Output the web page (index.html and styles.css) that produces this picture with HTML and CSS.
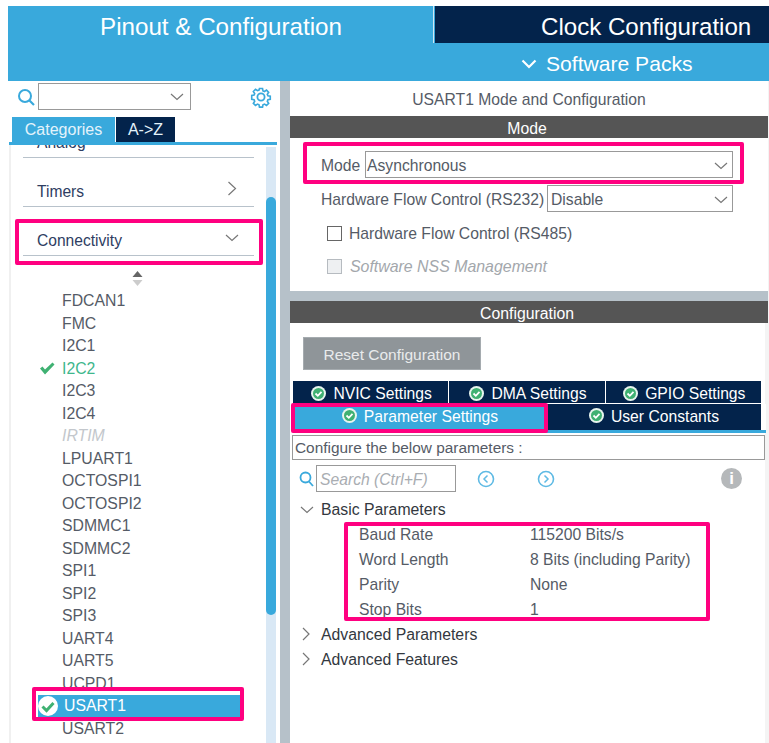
FILE: index.html
```html
<!DOCTYPE html>
<html lang="en">
<head>
<meta charset="utf-8">
<title>USART1 Mode and Configuration</title>
<link rel="stylesheet" href="styles.css">
</head>
<body>
<div class="page">
  <header class="head">
    <div class="head-tabs">
      <div class="head-tab head-active">Pinout &amp; Configuration</div>
      <div class="head-tab head-dark">Clock Configuration</div>
    </div>
    <div class="head-sub">
      <svg class="sub-chev" width="16" height="10" viewBox="0 0 16 10"><path d="M1.500 1.500 8 8l6.500-6.500" fill="none" stroke="#fff" stroke-width="2.200"/></svg>
      <span>Software Packs</span>
    </div>
  </header>

  <div class="body">
    <aside class="left">
      <div class="search-row">
        <svg class="mag" width="19" height="19" viewBox="0 0 19 19"><circle cx="8" cy="8" r="6" fill="none" stroke="#39a9dc" stroke-width="2"/><path d="M12.500 12.500 17 17" stroke="#39a9dc" stroke-width="2.200"/></svg>
        <div class="combo">
          <svg width="14" height="8" viewBox="0 0 14 8"><path d="M1 1l6 5.500L13 1" fill="none" stroke="#777" stroke-width="1.200"/></svg>
        </div>
        <svg class="gear" width="22" height="22" viewBox="0 0 22 22"><g fill="none" stroke="#39a9dc" stroke-width="1.800"><circle cx="11" cy="11" r="3.600"/><path d="M9.300 1.600h3.400l.5 2.600 1.700.7 2.200-1.500 2.400 2.400-1.500 2.200.7 1.700 2.600.5v3.400l-2.600.5-.7 1.700 1.500 2.200-2.400 2.400-2.200-1.500-1.700.7-.5 2.600H9.300l-.5-2.600-1.700-.7-2.200 1.500-2.400-2.400 1.500-2.200-.7-1.700-2.600-.5V9.300l2.600-.5.700-1.700-1.500-2.200 2.400-2.400 2.200 1.500 1.700-.7z" transform="translate(1.100 1.100) scale(.9)"/></g></svg>
      </div>
      <div class="cat-tabs">
        <div class="cat-tab cat-on">Categories</div>
        <div class="cat-tab cat-off">A-&gt;Z</div>
      </div>
      <div class="list-wrap">
        <div class="list">
          <div class="scroller">
            <div class="cat">Analog</div>
            <div class="cat">Timers
              <svg class="cat-ico" width="10" height="15" viewBox="0 0 10 15"><path d="M1.500 1l7 6.500-7 6.500" fill="none" stroke="#777" stroke-width="1.200"/></svg>
            </div>
            <div class="cat cat-open">Connectivity
              <svg class="cat-ico" width="14" height="8" viewBox="0 0 14 8"><path d="M1 1l6 5.500L13 1" fill="none" stroke="#777" stroke-width="1.200"/></svg>
            </div>
            <div class="sort">
              <svg width="11" height="15" viewBox="0 0 11 15"><path d="M5.500 0 10.500 6H.5z" fill="#666"/><path d="M5.500 15 10.500 9H.5z" fill="#ccc"/></svg>
            </div>
            <ul class="items">
              <li>FDCAN1</li>
              <li>FMC</li>
              <li>I2C1</li>
              <li class="ok"><svg class="tick" width="16" height="13" viewBox="0 0 16 13"><path d="M1 6.500l2.500-2L6 7.500 13.500.5 15.500 2.500 6 12.500z" fill="#3fb172"/></svg>I2C2</li>
              <li>I2C3</li>
              <li>I2C4</li>
              <li class="off">IRTIM</li>
              <li>LPUART1</li>
              <li>OCTOSPI1</li>
              <li>OCTOSPI2</li>
              <li>SDMMC1</li>
              <li>SDMMC2</li>
              <li>SPI1</li>
              <li>SPI2</li>
              <li>SPI3</li>
              <li>UART4</li>
              <li>UART5</li>
              <li>UCPD1</li>
              <li class="sel"><svg class="sel-ico" width="20" height="20" viewBox="0 0 20 20"><circle cx="10" cy="10" r="10" fill="#fff"/><path d="M4.500 10.500 8.500 14.500 15.500 7" fill="none" stroke="#3fb172" stroke-width="3"/></svg>USART1</li>
              <li>USART2</li>
            </ul>
          </div>
        </div>
        <div class="track"><div class="thumb"></div></div>
      </div>
    </aside>

    <main class="right">
      <div class="title">USART1 Mode and Configuration</div>
      <div class="bar">Mode</div>
      <section class="mode">
        <div class="frow row-mode">
          <label class="flabel">Mode</label>
          <div class="select sel-wide">Asynchronous<svg width="14" height="8" viewBox="0 0 14 8"><path d="M1 1l6 5.500L13 1" fill="none" stroke="#777" stroke-width="1.200"/></svg></div>
        </div>
        <div class="frow row-hw">
          <label class="flabel">Hardware Flow Control (RS232)</label>
          <div class="select sel-hw">Disable<svg width="14" height="8" viewBox="0 0 14 8"><path d="M1 1l6 5.500L13 1" fill="none" stroke="#777" stroke-width="1.200"/></svg></div>
        </div>
        <div class="crow crow-a"><span class="box"></span>Hardware Flow Control (RS485)</div>
        <div class="crow crow-b"><span class="box box-off"></span>Software NSS Management</div>
      </section>
      <div class="split"></div>
      <div class="bar">Configuration</div>
      <section class="conf">
        <div class="reset">Reset Configuration</div>
        <div class="tabs tabs-top">
          <div class="tab"><svg class="ci" width="15" height="15" viewBox="0 0 15 15"><circle cx="7.500" cy="7.500" r="7.500" fill="#e8f5ee"/><circle cx="7.500" cy="7.500" r="5.500" fill="#3fb172"/><path d="M4.500 7.500 6.800 9.800 10.500 5.800" fill="none" stroke="#fff" stroke-width="1.800"/></svg>NVIC Settings</div>
          <div class="tab"><svg class="ci" width="15" height="15" viewBox="0 0 15 15"><circle cx="7.500" cy="7.500" r="7.500" fill="#e8f5ee"/><circle cx="7.500" cy="7.500" r="5.500" fill="#3fb172"/><path d="M4.500 7.500 6.800 9.800 10.500 5.800" fill="none" stroke="#fff" stroke-width="1.800"/></svg>DMA Settings</div>
          <div class="tab"><svg class="ci" width="15" height="15" viewBox="0 0 15 15"><circle cx="7.500" cy="7.500" r="7.500" fill="#e8f5ee"/><circle cx="7.500" cy="7.500" r="5.500" fill="#3fb172"/><path d="M4.500 7.500 6.800 9.800 10.500 5.800" fill="none" stroke="#fff" stroke-width="1.800"/></svg>GPIO Settings</div>
        </div>
        <div class="tabs tabs-bot">
          <div class="tab tab-on"><svg class="ci" width="15" height="15" viewBox="0 0 15 15"><circle cx="7.500" cy="7.500" r="7.500" fill="#e8f5ee"/><circle cx="7.500" cy="7.500" r="5.500" fill="#3fb172"/><path d="M4.500 7.500 6.800 9.800 10.500 5.800" fill="none" stroke="#fff" stroke-width="1.800"/></svg>Parameter Settings</div>
          <div class="tab tab-user"><svg class="ci" width="15" height="15" viewBox="0 0 15 15"><circle cx="7.500" cy="7.500" r="7.500" fill="#e8f5ee"/><circle cx="7.500" cy="7.500" r="5.500" fill="#3fb172"/><path d="M4.500 7.500 6.800 9.800 10.500 5.800" fill="none" stroke="#fff" stroke-width="1.800"/></svg>User Constants</div>
        </div>
        <div class="hint">Configure the below parameters :</div>
        <div class="tools">
          <svg class="mag2" width="15" height="16" viewBox="0 0 15 16"><circle cx="6.500" cy="6.500" r="5" fill="none" stroke="#39a9dc" stroke-width="1.800"/><path d="M10 10.500 14 15" stroke="#39a9dc" stroke-width="1.800"/></svg>
          <div class="find">Search (Ctrl+F)</div>
          <svg class="nav nav-l" width="18" height="18" viewBox="0 0 18 18"><circle cx="9" cy="9" r="7.500" fill="none" stroke="#5fbae4" stroke-width="1.600"/><path d="M10.500 5.500 7 9l3.500 3.500" fill="none" stroke="#5fbae4" stroke-width="1.500"/></svg>
          <svg class="nav nav-r" width="18" height="18" viewBox="0 0 18 18"><circle cx="9" cy="9" r="7.500" fill="none" stroke="#5fbae4" stroke-width="1.600"/><path d="M7.500 5.500 11 9l-3.500 3.500" fill="none" stroke="#5fbae4" stroke-width="1.500"/></svg>
          <div class="info">i</div>
        </div>
        <div class="tree">
          <div class="node"><svg class="tw" width="14" height="8" viewBox="0 0 14 8"><path d="M1 1l6 5.500L13 1" fill="none" stroke="#777" stroke-width="1.200"/></svg>Basic Parameters</div>
          <dl class="params">
            <dt>Baud Rate</dt><dd>115200 Bits/s</dd>
            <dt>Word Length</dt><dd>8 Bits (including Parity)</dd>
            <dt>Parity</dt><dd>None</dd>
            <dt>Stop Bits</dt><dd>1</dd>
          </dl>
          <div class="node"><svg class="tw tw-r" width="8" height="14" viewBox="0 0 8 14"><path d="M1 1l6 6-6 6" fill="none" stroke="#777" stroke-width="1.200"/></svg>Advanced Parameters</div>
          <div class="node"><svg class="tw tw-r" width="8" height="14" viewBox="0 0 8 14"><path d="M1 1l6 6-6 6" fill="none" stroke="#777" stroke-width="1.200"/></svg>Advanced Features</div>
        </div>
      </section>
    </main>
  </div>

  <div class="mark mark-conn"></div>
  <div class="mark mark-usart"></div>
  <div class="mark mark-mode"></div>
  <div class="mark mark-param"></div>
  <div class="mark mark-baud"></div>
</div>
</body>
</html>
```
FILE: styles.css
```css
* { box-sizing: border-box; }
html, body { margin: 0; height: 100%; overflow: hidden; background: #fff; }
body { font-family: "Liberation Sans", Arial, sans-serif; font-size: 15.7px; color: #555b66; }
.page { position: relative; width: 769px; height: 743px; overflow: hidden; padding: 6px 0 0 8px; display: flex; flex-direction: column; }

.head { flex: none; background: #39a9dc; color: #fff; }
.head-tabs { display: flex; height: 37px; }
.head-tab { font-size: 24.2px; line-height: 42px; height: 37px; }
.head-active { width: 426px; padding-left: 92px; border-right: 1px solid #cfe7f4; }
.head-dark { margin-left: 1px; flex: 1; background: #03234b; padding-left: 106px; font-size: 24.1px; }
.head-sub { height: 38px; display: flex; align-items: center; padding: 3px 0 0 513px; font-size: 21.1px; }
.sub-chev { margin-right: 9px; }

.body { flex: 1; min-height: 0; display: flex; }
.left { width: 272px; flex: none; display: flex; flex-direction: column; }
.search-row { height: 36px; display: flex; align-items: flex-start; padding: 2px 0 0 9px; position: relative; }
.mag { margin: 5px 2px 0 0; }
.combo { width: 153px; height: 27px; border: 1px solid #999; display: flex; align-items: center; justify-content: flex-end; padding-right: 6px; }
.gear { margin: 3px 0 0 59px; }
.cat-tabs { display: flex; gap: 1px; height: 25px; padding-left: 4px; font-size: 16px; }
.cat-tab { line-height: 25px; text-align: center; }
.cat-on { width: 103px; background: #39a9dc; color: #e4f3fb; }
.cat-off { width: 59px; background: #03234b; color: #e4f3fb; }
.list-wrap { flex: 1; min-height: 0; display: flex; border-top: 3px solid #39a9dc; margin: 0 3px 0 1px; position: relative; }
.list { flex: 1; overflow: hidden; border-left: 2px solid #f0f0f0; }
.scroller { margin-top: -36px; }
.cat { height: 49px; margin: 0 12px 0 12px; padding: 24px 0 0 14px; line-height: 20px; font-size: 15.6px; border-bottom: 1px solid #b8c2cb; color: #2e3d62; position: relative; }
.cat-ico { position: absolute; right: 17px; top: 23px; }
.cat-open .cat-ico { right: 15px; top: 27px; }
.sort { height: 34px; padding-top: 15px; text-align: center; line-height: 0; padding-right: 3px; }
.items { list-style: none; margin: 0; padding: 0; font-size: 15.8px; }
.items li { height: 22.5px; line-height: 22.5px; padding-left: 51px; position: relative; }
.ok { color: #3fb78d; }
.tick { position: absolute; left: 28px; top: 4px; }
.off { color: #c3c7cc; font-style: italic; }
.items .sel { background: #39a9dc; color: #fff; margin: -1px 24px -.5px 26px; padding-left: 27px; outline: 1px solid #fff; outline-offset: -1px; height: 24px; line-height: 24px; display: flex; }
.sel-ico { position: absolute; left: 1px; top: 2px; }
.track { width: 10px; flex: none; background: #d9e8f5; position: relative; margin: 2px 1px 0 0; }
.thumb { position: absolute; left: 0; right: 0; top: 50px; height: 418px; border-radius: 5px; background: #39a9dc; }

.right { flex: 1; min-width: 0; border-left: 10px solid #b6c1c9; border-right: 1px solid #f4f4f4; display: flex; flex-direction: column; }
.title { height: 35px; line-height: 38px; text-align: center; }
.bar { height: 22px; background: #555; color: #fff; text-align: center; line-height: 26px; flex: none; padding-right: 4px; font-size: 15.8px; }
.mode { height: 153px; flex: none; padding: 13px 0 0 31px; position: relative; }
.frow { display: flex; align-items: center; }
.flabel { padding-top: 2px; }
.row-mode { height: 27px; margin-bottom: 7px; }
.row-mode .flabel { width: 44px; }
.row-hw { height: 27px; }
.row-hw .flabel { width: 226px; }
.select { height: 27px; border: 1px solid #999; display: flex; align-items: center; justify-content: space-between; padding: 2px 4px 0 1px; }
.sel-wide { width: 368px; }
.sel-hw { width: 186px; padding-left: 3px; }
.crow { display: flex; align-items: center; height: 33px; padding-left: 6px; gap: 7px; }
.crow-a { margin-top: 5px; }
.crow-b { color: #a3a7ac; font-style: italic; font-size: 15.9px; gap: 8px; }
.box { width: 15px; height: 15px; border: 1.500px solid #666; background: #fff; flex: none; }
.box-off { border-color: #b6bbc0; background: #eef0f2; }
.split { height: 10px; flex: none; background: #b6c1c9; }
.conf { flex: 1; min-height: 0; padding: 14px 0 0; border-right: 3px solid #f4f4f4; }
.reset { width: 178px; height: 33px; margin-left: 13px; background: #8f9599; color: #e9ebec; text-align: center; line-height: 34px; border: 1px solid #a5abaf; font-size: 15.5px; }
.tabs { display: flex; background: #fff; margin-left: 3px; width: 468px; color: #fff; }
.tabs-top { margin-top: 11px; gap: 1px; }
.tabs-top .tab { height: 22px; line-height: 25px; flex: 1; }
.tabs-bot { margin-top: 1px; height: 29px; border-bottom: 3px solid #39a9dc; width: 473px; }
.tabs-bot .tab { height: 26px; line-height: 25px; }
.tab { background: #03234b; display: flex; justify-content: center; align-items: flex-start; padding-left: 2px; }
.tab-on { width: 252px; background: #39a9dc; }
.tab-user { width: 216px; }
.ci { margin: 4px 7px 0 0; flex: none; }
.tabs-top .ci { margin-top: 5px; }
.hint { margin: 2px 3px 0 2px; height: 25px; border: 1px solid #999; line-height: 24px; padding-left: 2px; width: 473px; font-size: 15.4px; }
.tools { display: flex; align-items: center; height: 27px; margin-top: 5px; padding-left: 9px; position: relative; }
.mag2 { margin-right: 2px; }
.find { width: 140px; height: 27px; border: 1px solid #999; color: #a9adb2; font-style: italic; line-height: 28px; padding-left: 3px; }
.nav-l { margin-left: 21px; }
.nav-r { margin-left: 42px; }
.info { width: 21px; height: 21px; border-radius: 50%; background: #b5b8ba; color: #fff; font-weight: bold; font-size: 17px; line-height: 21px; text-align: center; margin-left: 166px; }
.tree { padding-top: 5px; }
.node { height: 25px; line-height: 25px; padding-left: 31px; color: #333840; position: relative; font-size: 15.8px; }
.tw { position: absolute; left: 10px; top: 9px; }
.tw-r { left: 12px; top: 5px; }
.params { margin: 0; display: grid; grid-template-columns: 171px 1fr; padding-left: 69px; }
.params dt, .params dd { margin: 0; height: 25px; line-height: 25px; }

.mark { position: absolute; border: 4px solid #ff0080; border-radius: 2px; }
.mark-conn { left: 15px; top: 219px; width: 248px; height: 46px; }
.mark-usart { left: 32px; top: 687px; width: 212px; height: 34px; }
.mark-mode { left: 303px; top: 142px; width: 441px; height: 42px; }
.mark-param { left: 291px; top: 403px; width: 257px; height: 30px; }
.mark-baud { left: 344px; top: 522px; width: 366px; height: 99px; }
```
